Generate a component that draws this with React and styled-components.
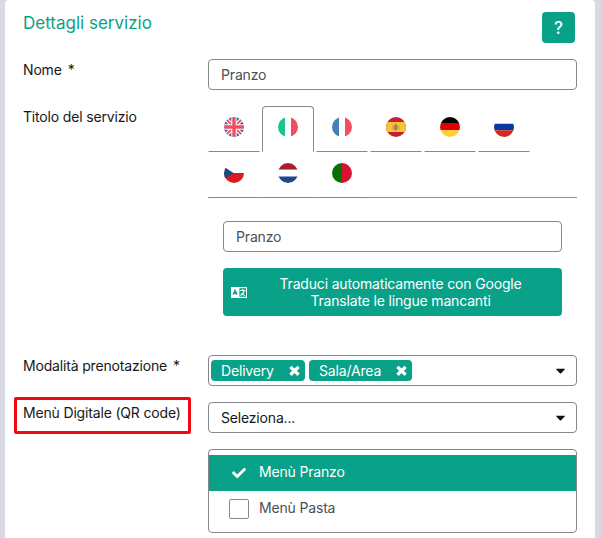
import React, { useState } from 'react';
import styled, { createGlobalStyle } from 'styled-components';
import { FaCaretDown, FaCheck } from 'react-icons/fa';

const GlobalStyle = createGlobalStyle`
  * {
    box-sizing: border-box;
  }
  body {
    margin: 0;
    background: #d8dae2;
    font-family: Inter, 'Liberation Sans', sans-serif;
    font-size: 14px;
    letter-spacing: -0.17px;
    color: #16181a;
    overflow: hidden;
  }
`;

const Card = styled.div`
  margin: 0 6px 0 5px;
  height: 538px;
  padding: 12px 18px 0;
  background: #fff;
  border-radius: 4px 4px 0 0;
`;

const Header = styled.div`
  display: flex;
  justify-content: space-between;
  height: 31px;
  padding-right: 2px;
  margin-bottom: 16px;
`;

const Title = styled.h2`
  margin: 0;
  font-size: 17px;
  font-weight: 400;
  line-height: 22px;
  letter-spacing: 0;
  color: #0aa188;
`;

const HelpButton = styled.button`
  width: 33px;
  height: 31px;
  padding: 0;
  border: none;
  border-radius: 4px;
  background: #09a188;
  color: white;
  font-family: inherit;
  font-size: 17px;
  font-weight: 500;
`;

const Row = styled.div`
  display: grid;
  grid-template-columns: 185px 369px;
  margin-bottom: 16px;
`;

const Label = styled.label`
  position: relative;
  line-height: 22px;
  white-space: nowrap;
`;

const Required = styled.span`
  margin-left: 6px;
`;

const Highlight = styled.span`
  position: absolute;
  top: -5px;
  left: -9px;
  width: 177px;
  height: 37px;
  border: 3px solid #ee0a12;
  border-radius: 2px;
`;

const Input = styled.input`
  display: block;
  width: 100%;
  height: 31px;
  padding: 0 12px 1px;
  border: 1px solid #85878b;
  border-radius: 4px;
  outline: none;
  background: #fff;
  color: #495057;
  font-family: inherit;
  font-size: 14px;
  letter-spacing: -0.15px;
`;

const Tabs = styled.div`
  display: flex;
  flex-wrap: wrap;
  box-shadow: inset 0 -1px 0 #909296;
`;

const Tab = styled.button`
  width: 52px;
  height: 46px;
  margin-right: 2px;
  padding: 10px 15px 0;
  display: flex;
  align-items: flex-start;
  background: transparent;
  border: 1px solid;
  border-color: ${(props) =>
    props.$active ? '#85878b #85878b #fff' : 'transparent transparent #85878b'};
  border-radius: ${(props) => (props.$active ? '4px 4px 0 0' : '0')};
`;

const FlagSvg = styled.svg`
  display: block;
  flex: none;
  width: 20px;
  height: 20px;
  border-radius: 50%;
`;

const TabPane = styled.div`
  padding: 23px 15px;
`;

const TranslateButton = styled.button`
  display: flex;
  align-items: center;
  width: 100%;
  height: 48px;
  margin-top: 16px;
  padding: 0 8px;
  border: none;
  border-radius: 4px;
  background: #09a188;
  color: white;
  font-family: inherit;
  font-size: 14px;
  letter-spacing: -0.17px;
  line-height: 17px;
`;

const TranslateText = styled.span`
  flex: 1;
  padding-bottom: 1px;
  text-align: center;
`;

const SelectBox = styled.div`
  display: flex;
  align-items: center;
  height: 31px;
  padding: 0 8px 0 ${(props) => (props.$multiple ? '2px' : '12px')};
  border: 1px solid #85878b;
  border-radius: 4px;

  > svg:last-child {
    margin-left: auto;
    color: #111;
  }
`;

const Tag = styled.span`
  display: flex;
  align-items: center;
  justify-content: space-between;
  width: ${(props) => props.$width};
  height: 21px;
  margin-right: 4px;
  padding: 0 5px 0 10px;
  border-radius: 4px;
  background: #09a188;
  color: white;
`;

const Menu = styled.div`
  padding: 5px 0;
  border: 1px solid #85878b;
  border-radius: 4px;
`;

const MenuItem = styled.div`
  display: flex;
  align-items: center;
  height: 36px;
  padding-left: 20px;
  background: ${(props) => (props.$selected ? '#09a188' : '#fff')};
  color: ${(props) => (props.$selected ? '#fff' : '#495057')};
`;

const MenuMark = styled.span`
  display: flex;
  align-items: center;
  justify-content: center;
  width: 20px;
  height: 20px;
  margin-right: 10px;
  border: 1px solid ${(props) => (props.$selected ? 'transparent' : '#85878b')};
  border-radius: 2px;
`;

const MenuText = styled.span`
  padding-bottom: 3px;
`;

const FLAGS = {
  en: (
    <>
      <path fill="#3d5fa5" d="M0 0h20v20H0z" />
      <path stroke="#fff" strokeWidth="4" d="M0 0l20 20M20 0L0 20" />
      <path stroke="#ee4056" strokeWidth="1.6" d="M0 0l20 20M20 0L0 20" />
      <path stroke="#fff" strokeWidth="5.4" d="M10 0v20M0 10h20" />
      <path stroke="#f04f62" strokeWidth="3.4" d="M10 0v20M0 10h20" />
    </>
  ),
  it: (
    <>
      <path fill="#fff" d="M0 0h20v20H0z" />
      <path fill="#18c783" d="M0 0h7v20H0z" />
      <path fill="#f04f62" d="M13 0h7v20h-7z" />
    </>
  ),
  fr: (
    <>
      <path fill="#fff" d="M0 0h20v20H0z" />
      <path fill="#4381b7" d="M0 0h7v20H0z" />
      <path fill="#f04f62" d="M13 0h7v20h-7z" />
    </>
  ),
  es: (
    <>
      <path fill="#c51f34" d="M0 0h20v20H0z" />
      <path fill="#f8c534" d="M0 5h20v10H0z" />
      <path fill="#d9a552" d="M6 8h1.2v5H6zM12.4 8h1.2v5h-1.2z" />
      <path fill="#b8785a" d="M7.7 8.4h4v3.2a2 2 0 0 1-4 0z" />
      <circle cx="9.7" cy="7.7" r="1" fill="#b9604a" />
      <circle cx="10" cy="10.5" r="1" fill="#8c858e" />
    </>
  ),
  de: (
    <>
      <path fill="#000" d="M0 0h20v6.7H0z" />
      <path fill="#e00000" d="M0 6.7h20v6.6H0z" />
      <path fill="#ffd034" d="M0 13.3h20V20H0z" />
    </>
  ),
  ru: (
    <>
      <path fill="#fff" d="M0 0h20v6.7H0z" />
      <path fill="#0739a5" d="M0 6.7h20v6.6H0z" />
      <path fill="#d52b1e" d="M0 13.3h20V20H0z" />
    </>
  ),
  cs: (
    <>
      <path fill="#fff" d="M0 0h20v10H0z" />
      <path fill="#d91a20" d="M0 10h20v10H0z" />
      <path fill="#174a80" d="M0 3.7L9.5 10 0 16.3z" />
    </>
  ),
  nl: (
    <>
      <path fill="#ae1c2b" d="M0 0h20v6.7H0z" />
      <path fill="#fff" d="M0 6.7h20v6.6H0z" />
      <path fill="#21468b" d="M0 13.6h20V20H0z" />
    </>
  ),
  pt: (
    <>
      <path fill="#077008" d="M0 0h10v20H0z" />
      <path fill="#d51431" d="M10 0h10v20H10z" />
    </>
  ),
};

const LanguageIcon = () => (
  <svg width="16" height="11" viewBox="0 0 16 11">
    <path fill="#fff" d="M.5 0h15a.5.5 0 0 1 .5.5v10a.5.5 0 0 1-.5.5H.5a.5.5 0 0 1-.5-.5V.5A.5.5 0 0 1 .5 0z" />
    <path fill="#09a188" d="M8.4 1.2H15v8.6H8.4z" />
    <path stroke="#09a188" strokeWidth="1.4" fill="none" d="M2.2 7.6l1.9-4.2L6 7.6M3 6.3h2.2" />
    <path stroke="#fff" strokeWidth="1.2" fill="none" d="M9 3.5h5.4M11.7 2v1.5M13.4 3.7c-.5 2.2-2 3.7-4 4.8M10.8 6c.6 1.1 1.6 1.9 2.9 2.5" />
  </svg>
);

// chunky cross used to remove a tag
const RemoveIcon = () => (
  <svg width="11" height="11" viewBox="0 0 11 11">
    <path
      stroke="#fff"
      strokeWidth="3.3"
      strokeLinecap="square"
      d="M2.6 3l5.8 5.6M8.4 3L2.6 8.6"
    />
  </svg>
);

const App = () => {
  const [name, setName] = useState('Pranzo');
  const [titles, setTitles] = useState({ it: 'Pranzo' });
  const [language, setLanguage] = useState('it');
  const [modes, setModes] = useState([
    { label: 'Delivery', width: '94px' },
    { label: 'Sala/Area', width: '103px' },
  ]);
  const [selectedMenu, setSelectedMenu] = useState('Menù Pranzo');

  const removeMode = (label) => {
    setModes(modes.filter((mode) => mode.label !== label));
  };

  return (
    <>
      <GlobalStyle />
      <Card>
        <Header>
          <Title>Dettagli servizio</Title>
          <HelpButton>?</HelpButton>
        </Header>

        <Row>
          <Label>
            Nome<Required>*</Required>
          </Label>
          <Input value={name} onChange={(e) => setName(e.target.value)} />
        </Row>

        <Row>
          <Label>Titolo del servizio</Label>
          <div>
            <Tabs>
              {Object.keys(FLAGS).map((code) => (
                <Tab key={code} $active={code === language} onClick={() => setLanguage(code)}>
                  <FlagSvg viewBox="0 0 20 20">{FLAGS[code]}</FlagSvg>
                </Tab>
              ))}
            </Tabs>
            <TabPane>
              <Input
                value={titles[language] || ''}
                onChange={(e) => setTitles({ ...titles, [language]: e.target.value })}
              />
              <TranslateButton>
                <LanguageIcon />
                <TranslateText>
                  Traduci automaticamente con Google
                  <br />
                  Translate le lingue mancanti
                </TranslateText>
              </TranslateButton>
            </TabPane>
          </div>
        </Row>

        <Row>
          <Label>
            Modalità prenotazione<Required>*</Required>
          </Label>
          <SelectBox $multiple>
            {modes.map((mode) => (
              <Tag key={mode.label} $width={mode.width} onClick={() => removeMode(mode.label)}>
                {mode.label}
                <RemoveIcon />
              </Tag>
            ))}
            <FaCaretDown size={15} />
          </SelectBox>
        </Row>

        <Row>
          <Label>
            Menù Digitale (QR code)
            <Highlight />
          </Label>
          <SelectBox>
            Seleziona...
            <FaCaretDown size={15} />
          </SelectBox>
        </Row>

        <Row>
          <span />
          <Menu>
            {['Menù Pranzo', 'Menù Pasta'].map((menu) => (
              <MenuItem
                key={menu}
                $selected={menu === selectedMenu}
                onClick={() => setSelectedMenu(menu)}
              >
                <MenuMark $selected={menu === selectedMenu}>
                  {menu === selectedMenu && <FaCheck size={14} />}
                </MenuMark>
                <MenuText>{menu}</MenuText>
              </MenuItem>
            ))}
          </Menu>
        </Row>
      </Card>
    </>
  );
};

export default App;
